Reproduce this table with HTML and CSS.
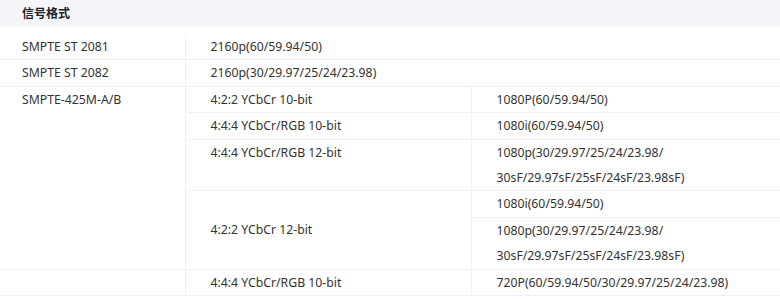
FILE: index.html
```html
<!DOCTYPE html>
<html lang="zh-CN">
<head>
<meta charset="utf-8">
<link rel="stylesheet" href="styles.css">
</head>
<body>
<section class="spec">
  <h3 class="spec-title">信号格式</h3>
  <table class="spec-table">
    <colgroup>
      <col class="c1"><col class="c2"><col class="c3">
    </colgroup>
    <tbody>
      <tr><td class="first">SMPTE ST 2081</td><td colspan="2">2160p(60/59.94/50)</td></tr>
      <tr><td class="first">SMPTE ST 2082</td><td colspan="2">2160p(30/29.97/25/24/23.98)</td></tr>
      <tr><td class="first top" rowspan="5">SMPTE-425M-A/B</td><td>4:2:2 YCbCr 10-bit</td><td>1080P(60/59.94/50)</td></tr>
      <tr><td>4:4:4 YCbCr/RGB 10-bit</td><td>1080i(60/59.94/50)</td></tr>
      <tr><td class="top">4:4:4 YCbCr/RGB 12-bit</td><td>1080p(30/29.97/25/24/23.98/<br>30sF/29.97sF/25sF/24sF/23.98sF)</td></tr>
      <tr><td rowspan="2">4:2:2 YCbCr 12-bit</td><td>1080i(60/59.94/50)</td></tr>
      <tr><td>1080p(30/29.97/25/24/23.98/<br>30sF/29.97sF/25sF/24sF/23.98sF)</td></tr>
      <tr><td class="first"></td><td>4:4:4 YCbCr/RGB 10-bit</td><td>720P(60/59.94/50/30/29.97/25/24/23.98)</td></tr>
    </tbody>
  </table>
</section>
</body>
</html>
```

FILE: styles.css
```css
* { box-sizing: border-box; }
html, body { margin: 0; padding: 0; background: #fff; }
body {
  font-family: "Noto Sans", "Noto Sans CJK SC", sans-serif;
  font-size: 12.25px;
  color: #333;
}
.spec-title {
  margin: 0 0 7px;
  height: 27px;
  line-height: 27px;
  padding-left: 22px;
  background: #f3f5f9;
  font-size: 12px;
  font-weight: 700;
  color: #1d2129;
}
.spec-table {
  width: 780px;
  border-collapse: collapse;
  table-layout: fixed;
}
.c1 { width: 185px; }
.c2 { width: 286px; }
.spec-table td {
  padding: 0 0 0 25px;
  line-height: 25.4px;
  border-bottom: 1px solid #edf0f5;
  border-left: 1px solid #edf0f5;
  vertical-align: middle;
  white-space: nowrap;
}
.spec-table td.first {
  padding-left: 22px;
  border-left: none;
}
.spec-table td.top { vertical-align: top; }
```
